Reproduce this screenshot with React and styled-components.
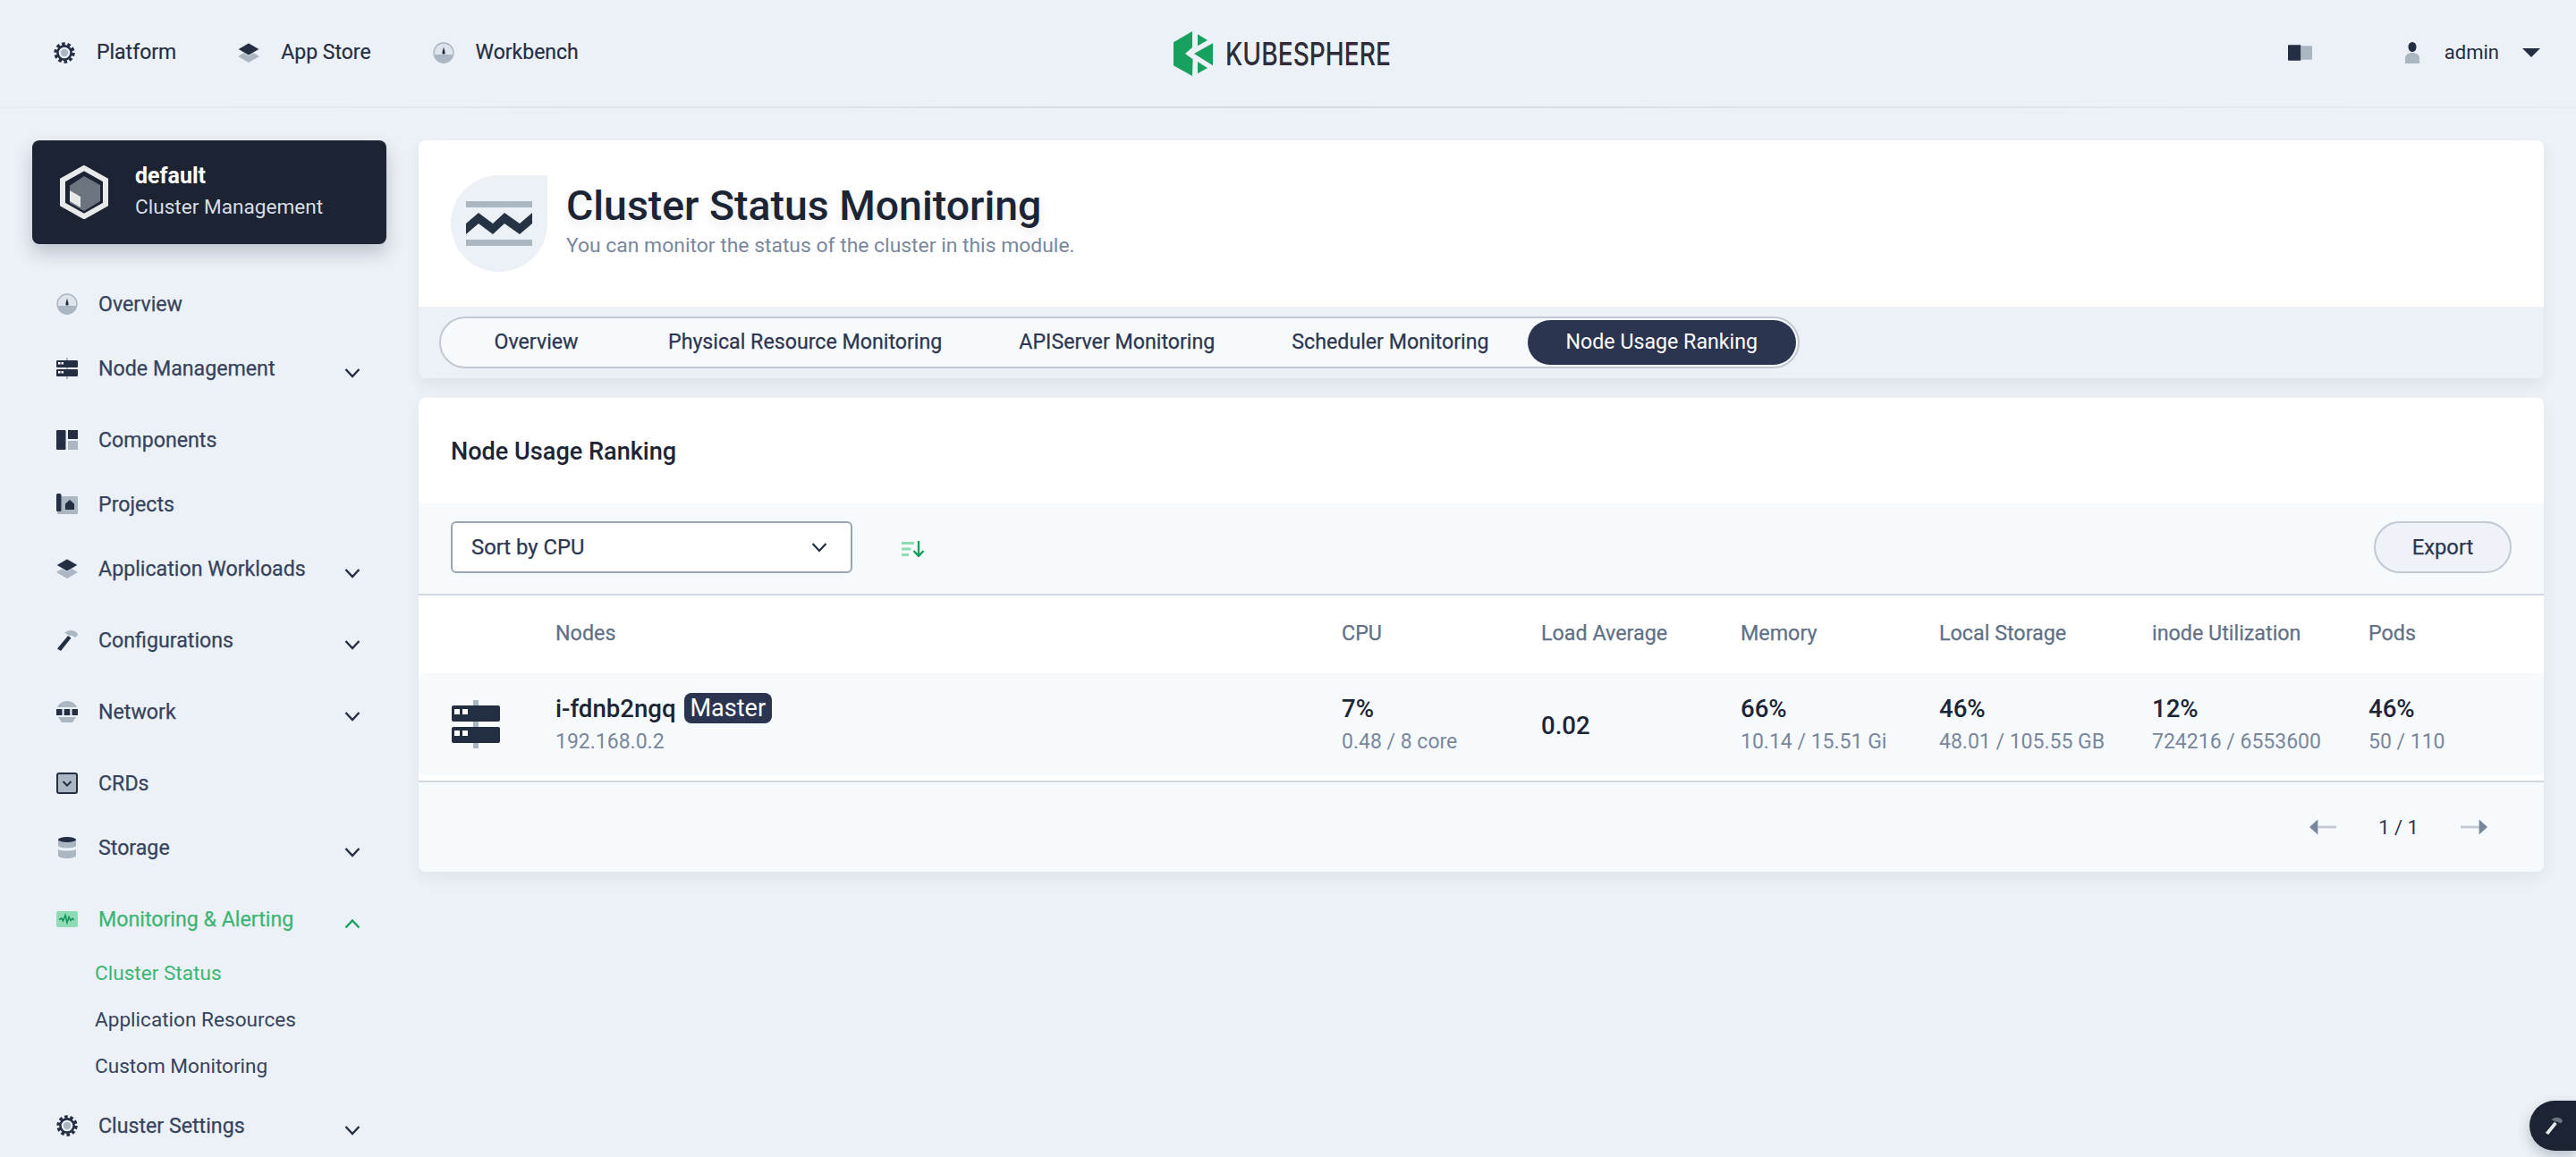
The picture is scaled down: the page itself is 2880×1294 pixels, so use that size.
import React from "react";
import styled, { createGlobalStyle } from "styled-components";

const DARK = "#242e42";
const LIGHT = "#abb6c3";
const GREEN = "#3cb574";
const BG = "#ecf1f7";
const FONT = `Roboto, Inter, "Noto Sans", sans-serif`;

const Global = createGlobalStyle`
  html, body { margin: 0; padding: 0; height: 1294px; overflow: hidden; background: ${BG}; }
  body { font-family: ${FONT}; font-size: 24px; color: ${DARK}; }
  * { box-sizing: border-box; }
`;

const Page = styled.div`
  position: relative;
  width: 2880px;
  height: 1294px;
  overflow: hidden;
  background: ${BG};
`;

/* Header */
const Header = styled.header`
  position: relative;
  display: grid;
  grid-template-columns: 1fr auto 1fr;
  align-items: center;
  height: 121px;
  padding: 0 40px 2px 60px;
  border-bottom: 2px solid transparent;
  border-image: linear-gradient(90deg, #e8ecf2 0%, #d4dae4 50%, #e8ecf2 100%) 1;
`;
const TopNav = styled.nav`
  display: flex;
  align-items: center;
  gap: 69px;
`;
const TopLink = styled.a`
  display: flex;
  align-items: center;
  gap: 24px;
  font-size: 23px;
  color: ${DARK};
  -webkit-text-stroke: 0.2px ${DARK};
`;
const TopIcon = styled.svg`
  flex: none;
  width: 24px;
  height: 24px;
`;
const Logo = styled.svg`
  display: block;
  width: 310px;
  height: 50px;
  margin: 3px -34px 0 0;
`;
const TopRight = styled.div`
  display: flex;
  justify-content: flex-end;
  align-items: center;
`;
const ThemeBtn = styled.svg`
  width: 27px;
  height: 18px;
  margin-right: 103px;
`;
const UserName = styled.span`
  margin: 0 26px 0 27px;
  font-size: 22px;
  color: ${DARK};
`;
const Caret = styled.i`
  width: 0;
  height: 0;
  border-left: 10px solid transparent;
  border-right: 10px solid transparent;
  border-top: 10px solid ${DARK};
`;

/* Shell */
const Shell = styled.div`
  display: grid;
  grid-template-columns: 396px 2376px;
  column-gap: 36px;
  padding: 36px 0 0 36px;
`;

/* Sidebar */
const Side = styled.aside`
  display: flex;
  flex-direction: column;
`;
const ClusterCard = styled.div`
  display: flex;
  align-items: center;
  gap: 29px;
  height: 116px;
  margin-bottom: 30px;
  padding-left: 30px;
  border-radius: 8px;
  background: #1c2333;
  box-shadow: 0 10px 20px rgba(36, 46, 66, 0.24);
`;
const ClusterText = styled.div`
  display: flex;
  flex-direction: column;
  gap: 7px;
  padding-bottom: 1px;
`;
const ClusterName = styled.div`
  font-size: 25px;
  line-height: 28px;
  font-weight: 700;
  color: #fff;
`;
const ClusterKind = styled.div`
  font-size: 22.6px;
  line-height: 28px;
  color: #d8dee5;
`;
const NavItem = styled.div`
  display: flex;
  align-items: flex-start;
  height: ${(p) => (p.$expand ? "80px" : "72px")};
  padding: 25px 27px 0 27px;
  color: ${(p) => (p.$active ? GREEN : "#36435c")};
`;
const NavIcon = styled.svg`
  flex: none;
  width: 24px;
  height: 24px;
  margin-right: 23px;
`;
const NavLabel = styled.span`
  flex: 1;
  font-size: 23.2px;
  line-height: 24px;
  -webkit-text-stroke: 0.25px currentColor;
`;
const Chevron = styled.svg`
  flex: none;
  width: 18px;
  height: 12px;
  margin-top: 11px;
  margin-right: 2px;
`;
const SubList = styled.div`
  display: flex;
  flex-direction: column;
  padding-bottom: 4px;
`;
const SubItem = styled.div`
  display: flex;
  align-items: center;
  height: 51.67px;
  padding-left: 70px;
  font-size: 22.6px;
  color: ${(p) => (p.$active ? GREEN : "#36435c")};
`;

/* Main */
const Main = styled.main`
  display: flex;
  flex-direction: column;
  gap: 22px;
`;
const HeadCard = styled.section`
  border-radius: 8px;
  overflow: hidden;
  background: ${BG};
  box-shadow: 0 8px 16px rgba(36, 46, 66, 0.07);
`;
const HeadTop = styled.div`
  display: flex;
  align-items: center;
  gap: 21px;
  height: 186px;
  padding: 0 36px;
  background: #fff;
`;
const Tear = styled.div`
  display: flex;
  align-items: center;
  justify-content: center;
  flex: none;
  width: 108px;
  height: 108px;
  border-radius: 50% 0 50% 50%;
  background: ${BG};
`;
const TitleBox = styled.div`
  display: flex;
  flex-direction: column;
  gap: 6px;
  padding-bottom: 6px;
`;
const Title = styled.h1`
  margin: 0;
  font-size: 46.4px;
  line-height: 50px;
  font-weight: 500;
  color: #1c2535;
  text-shadow: 0 6px 10px rgba(36, 46, 66, 0.1);
`;
const Desc = styled.p`
  margin: 0;
  font-size: 22.9px;
  line-height: 28px;
  color: #79879c;
`;
const TabBar = styled.div`
  display: flex;
  align-items: center;
  height: 80px;
  padding-left: 23px;
`;
const Tabs = styled.div`
  display: flex;
  align-items: center;
  height: 58px;
  padding: 0 2px;
  border: 2px solid #c1c9d4;
  border-radius: 29px;
  background: #f7fafd;
`;
const Tab = styled.div`
  display: flex;
  align-items: center;
  justify-content: center;
  height: 50px;
  min-width: ${(p) => p.$min || 0}px;
  padding: 0 43px 2px;
  border-radius: 25px;
  font-size: 23.2px;
  -webkit-text-stroke: ${(p) => (p.$active ? 0 : 0.25)}px currentColor;
  color: ${(p) => (p.$active ? "#fff" : "#2c3650")};
  background: ${(p) => (p.$active ? "#2c3550" : "transparent")};
`;
const RankCard = styled.section`
  border-radius: 8px;
  overflow: hidden;
  background: #f7fafd;
  box-shadow: 0 8px 16px rgba(36, 46, 66, 0.06);
`;
const RankTitle = styled.h2`
  display: flex;
  align-items: center;
  height: 118px;
  margin: 0;
  padding: 1px 0 0 36px;
  background: #fff;
  font-size: 27.1px;
  font-weight: 500;
  color: #1c2535;
`;
const Toolbar = styled.div`
  display: flex;
  align-items: center;
  height: 103px;
  padding: 0 36px 3px;
  border-bottom: 2px solid #d0d7e0;
`;
const Select = styled.div`
  display: flex;
  align-items: center;
  justify-content: space-between;
  width: 449px;
  height: 58px;
  padding: 0 26px 0 21px;
  border: 2px solid #99a5b5;
  border-radius: 6px;
  background: #fff;
  font-size: 23.8px;
  color: #2c3650;
  -webkit-text-stroke: 0.25px #2c3650;
`;
const SortIcon = styled.svg`
  width: 26px;
  height: 18px;
  margin: 4px 0 0 55px;
`;
const Export = styled.button`
  width: 154px;
  height: 58px;
  margin-left: auto;
  border: 2px solid #c1c9d4;
  border-radius: 29px;
  background: #eff2f8;
  font: 400 23.8px ${FONT};
  color: #2c3650;
  -webkit-text-stroke: 0.25px #2c3650;
`;
const columns = "153px 879px 223px 223px 222px 238px 242px 196px";
const HeadRow = styled.div`
  display: grid;
  grid-template-columns: ${columns};
  align-items: center;
  height: 87px;
  padding-bottom: 4px;
  background: #fff;
  font-size: 23.3px;
  color: #5f7087;
  -webkit-text-stroke: 0.25px #5f7087;
`;
const BodyWrap = styled.div`
  padding-bottom: 6px;
  border-bottom: 2px solid #d0d7e0;
  background: #fff;
`;
const BodyRow = styled.div`
  display: grid;
  grid-template-columns: ${columns};
  align-items: center;
  height: 114px;
  border-radius: 6px;
  background: #f7fafd;
`;
const NodeIconCell = styled.div`
  display: flex;
  padding-left: 37px;
`;
const Cell = styled.div`
  display: flex;
  flex-direction: column;
  gap: 10px;
  padding-top: 2px;
`;
const Main1 = styled.div`
  display: flex;
  align-items: center;
  gap: 9px;
  height: 28px;
  font-size: 27.6px;
  font-weight: 500;
  color: #1c2535;
`;
const Sub1 = styled.div`
  font-size: 23px;
  line-height: 28px;
  color: #79879c;
`;
const Badge = styled.span`
  display: flex;
  align-items: center;
  height: 34px;
  padding: 0 7px;
  border-radius: 8px;
  background: #2c3550;
  font-weight: 400;
  font-size: 27px;
  color: #fff;
`;
const Footer = styled.div`
  display: flex;
  align-items: center;
  justify-content: flex-end;
  gap: 47px;
  height: 100px;
  padding-right: 63px;
  font-size: 22px;
  color: #2c3650;
`;
const Arrow = styled.svg`
  width: 30px;
  height: 18px;
`;
const FloatBtn = styled.div`
  position: absolute;
  right: 0;
  top: 1231px;
  display: flex;
  align-items: center;
  padding-left: 17px;
  width: 52px;
  height: 56px;
  border-radius: 28px 0 0 28px;
  background: #1c2333;
  box-shadow: 0 6px 14px rgba(36, 46, 66, 0.25);
`;

/* Icons */
const Gear = () => (
  <>
    <circle cx="12" cy="12" r="10" fill="none" stroke={DARK} strokeWidth="3.4" strokeDasharray="3.6 2.68" />
    <circle cx="12" cy="12" r="7.6" fill="none" stroke={DARK} strokeWidth="2.6" />
    <circle cx="12" cy="12" r="4.2" fill={LIGHT} />
  </>
);
const Layers = () => (
  <>
    <path d="M12 9 24 16 12 23 0 16Z" fill={LIGHT} />
    <path d="M12 1 24 8 12 15 0 8Z" fill={DARK} stroke={BG} strokeWidth=".8" />
  </>
);
const Dash = () => (
  <>
    <circle cx="12" cy="12" r="11" fill="#dfe4eb" stroke={LIGHT} strokeWidth="1.4" />
    <path d="M2 14a10 10 0 0 0 20 0Z" fill={LIGHT} />
    <path d="M12 5.500 13.700 12a1.700 1.700 0 0 1-3.400 0Z" fill={DARK} />
  </>
);
const Server = () => (
  <>
    <rect x="11" y="0" width="2" height="24" fill={LIGHT} />
    <rect x="0" y="3" width="24" height="8" rx="1" fill={DARK} />
    <rect x="0" y="13" width="24" height="8" rx="1" fill={DARK} />
    <path d="M2 5h2.500v2.500H2zM5.500 5H8v2.500H5.500zM2 15h2.500v2.500H2zM5.500 15H8v2.500H5.500z" fill="#fff" />
  </>
);
const Comp = () => (
  <>
    <rect x="0" y="1" width="10.500" height="22" rx="1" fill={DARK} />
    <rect x="13" y="1" width="11" height="10" fill={DARK} />
    <rect x="13" y="13" width="11" height="10" fill={LIGHT} />
  </>
);
const Proj = () => (
  <>
    <rect x="1" y="3" width="23" height="20" rx="1" fill={LIGHT} />
    <rect x="0" y="0" width="5.500" height="20" rx="1.500" fill={DARK} />
    <path d="M15 7 20 11.500V18H10V11.500Z" fill={DARK} />
  </>
);
const Hammer = ({ head = LIGHT, handle = DARK }) => (
  <>
    <path d="M9 4C13 0 19 0 23 3.500L24 6 21.500 9 17 6.500 14.500 7 11.500 5Z" fill={head} />
    <path d="M13 7 16.500 9.500 5 24 1 21.500Z" fill={handle} />
  </>
);
const Net = () => (
  <>
    <path d="M1 7C2.500 3 7 0 12 0S21.500 3 23 7Z" fill={LIGHT} />
    <path d="M0 9h6.500v7H0zM8.700 9h6.600v7H8.700zM17.500 9H24v7h-6.500z" fill={DARK} />
    <path d="M2 18H22L18 24H6Z" fill={LIGHT} />
  </>
);
const Crd = () => (
  <>
    <rect x="1" y="1" width="22" height="22" rx="2" fill={LIGHT} stroke={DARK} strokeWidth="2" />
    <path d="M7.500 10 12 14.500 16.500 10" fill="none" stroke={DARK} strokeWidth="2" />
  </>
);
const Storage = () => (
  <>
    <path d="M2 2.500h20v8c-4 2.500-16 2.500-20 0Z" fill={LIGHT} />
    <path d="M2 14c4 2 16 2 20 0v7c0 1.500-4.500 3-10 3s-10-1.500-10-3Z" fill={LIGHT} />
    <ellipse cx="12" cy="3" rx="10" ry="3" fill={DARK} />
  </>
);
const Monitor = () => (
  <>
    <rect x="0" y="3" width="24" height="18" rx="2" fill="#8fdcb4" />
    <path d="M3 12.500 6 11 7.500 14 10 7.500 12 16 14 9.500 16 13.500 18 11 20 13" fill="none" stroke="#149158" strokeWidth="1.500" />
  </>
);
const Down = ({ up, color = DARK }) => (
  <Chevron viewBox="0 0 18 12">
    <path d={up ? "M1.500 10.500 9 2.500l7.500 8" : "M1.500 2 9 10l7.500-8"} fill="none" stroke={color} strokeWidth="2.400" />
  </Chevron>
);

const items = [
  { label: "Overview", icon: <Dash /> },
  { label: "Node Management", icon: <Server />, expand: true },
  { label: "Components", icon: <Comp /> },
  { label: "Projects", icon: <Proj /> },
  { label: "Application Workloads", icon: <Layers />, expand: true },
  { label: "Configurations", icon: <Hammer />, expand: true },
  { label: "Network", icon: <Net />, expand: true },
  { label: "CRDs", icon: <Crd /> },
  { label: "Storage", icon: <Storage />, expand: true },
];

const tabs = ["Overview", "Physical Resource Monitoring", "APIServer Monitoring", "Scheduler Monitoring", "Node Usage Ranking"];
const heads = ["", "Nodes", "CPU", "Load Average", "Memory", "Local Storage", "inode Utilization", "Pods"];
const metrics = [
  ["7%", "0.48 / 8 core"],
  ["0.02"],
  ["66%", "10.14 / 15.51 Gi"],
  ["46%", "48.01 / 105.55 GB"],
  ["12%", "724216 / 6553600"],
  ["46%", "50 / 110"],
];

export default function App() {
  return (
    <Page>
      <Global />
      <Header>
        <TopNav>
          <TopLink><TopIcon viewBox="0 0 24 24"><Gear /></TopIcon>Platform</TopLink>
          <TopLink><TopIcon viewBox="0 0 24 24"><Layers /></TopIcon>App Store</TopLink>
          <TopLink><TopIcon viewBox="0 0 24 24"><Dash /></TopIcon>Workbench</TopLink>
        </TopNav>
        <Logo viewBox="0 0 310 50">
          <path d="M0 12.300 21 0V18L13 25 21.600 31.300 21 50 0 38.300Z" fill="#17a05e" />
          <path d="M44 13.300V38.300L23 25Z" fill="#17a05e" />
          <path d="M27 3.300 38 10 27 16.300ZM27 34 38 41 27 47.300Z" fill="#17a05e" />
          <text x="58" y="38" fontFamily="Inter, sans-serif" fontSize="36" fontWeight="500" fill="#302c37" textLength="185" lengthAdjust="spacingAndGlyphs">KUBESPHERE</text>
        </Logo>
        <TopRight>
          <ThemeBtn viewBox="0 0 28 18">
            <rect x="0" y="0" width="15" height="18" rx="1" fill={DARK} />
            <rect x="15" y="1" width="13" height="16" fill={LIGHT} />
          </ThemeBtn>
          <svg width="18" height="24" viewBox="0 0 18 24">
            <ellipse cx="9" cy="5.500" rx="4.500" ry="5.500" fill={DARK} />
            <path d="M1 24V18C1 14 5 12 9 12S17 14 17 18V24Z" fill={LIGHT} />
          </svg>
          <UserName>admin</UserName>
          <Caret />
        </TopRight>
      </Header>
      <Shell>
        <Side>
          <ClusterCard>
            <svg width="56" height="60" viewBox="0 0 54 60">
              <path d="M27 3 51 16.500V43.500L27 57 3 43.500V16.500Z" fill="#1c2333" stroke="#e8e9ea" strokeWidth="6" />
              <path d="M27 12 45 22V40L27 51 11 42V22.500Z" fill="#6c7480" />
              <path d="M11 28 23 35V47L11 40Z" fill="#e8e9ea" />
            </svg>
            <ClusterText>
              <ClusterName>default</ClusterName>
              <ClusterKind>Cluster Management</ClusterKind>
            </ClusterText>
          </ClusterCard>
          {items.map((it) => (
            <NavItem key={it.label} $expand={it.expand}>
              <NavIcon viewBox="0 0 24 24">{it.icon}</NavIcon>
              <NavLabel>{it.label}</NavLabel>
              {it.expand && <Down />}
            </NavItem>
          ))}
          <NavItem $active>
            <NavIcon viewBox="0 0 24 24"><Monitor /></NavIcon>
            <NavLabel>Monitoring &amp; Alerting</NavLabel>
            <Down up color="#17a05e" />
          </NavItem>
          <SubList>
            <SubItem $active>Cluster Status</SubItem>
            <SubItem>Application Resources</SubItem>
            <SubItem>Custom Monitoring</SubItem>
          </SubList>
          <NavItem $expand>
            <NavIcon viewBox="0 0 24 24"><Gear /></NavIcon>
            <NavLabel>Cluster Settings</NavLabel>
            <Down />
          </NavItem>
        </Side>
        <Main>
          <HeadCard>
            <HeadTop>
              <Tear>
                <svg width="74" height="50" viewBox="0 0 74 50">
                  <rect y="0" width="74" height="7" fill={LIGHT} />
                  <rect y="43" width="74" height="7" fill={LIGHT} />
                  <path d="M0 25 14 13 30 25 43 13 60 25 74 13V25L60 37 43 25 30 37 14 25 0 37Z" fill="#253345" />
                </svg>
              </Tear>
              <TitleBox>
                <Title>Cluster Status Monitoring</Title>
                <Desc>You can monitor the status of the cluster in this module.</Desc>
              </TitleBox>
            </HeadTop>
            <TabBar>
              <Tabs>
                {tabs.map((t, i) => (
                  <Tab key={t} $min={i === 0 ? 209 : 0} $active={i === tabs.length - 1}>{t}</Tab>
                ))}
              </Tabs>
            </TabBar>
          </HeadCard>
          <RankCard>
            <RankTitle>Node Usage Ranking</RankTitle>
            <Toolbar>
              <Select>
                Sort by CPU
                <svg width="18" height="12" viewBox="0 0 18 12">
                  <path d="M1.500 2 9 10l7.500-8" fill="none" stroke={DARK} strokeWidth="2.200" />
                </svg>
              </Select>
              <SortIcon viewBox="0 0 26 18">
                <path d="M0 1h14v3H0zM0 7.500h10.500v3H0zM0 14h8v3H0z" fill="#8fdcb4" />
                <path d="M19 0V16M13.500 11l5.500 6 5.500-6" fill="none" stroke="#17a05e" strokeWidth="2.400" />
              </SortIcon>
              <Export>Export</Export>
            </Toolbar>
            <HeadRow>
              {heads.map((h) => <div key={h}>{h}</div>)}
            </HeadRow>
            <BodyWrap>
              <BodyRow>
                <NodeIconCell>
                  <svg width="54" height="54" viewBox="0 0 54 54">
                    <rect x="24" y="0" width="6" height="54" fill={LIGHT} />
                    <rect x="0" y="6" width="54" height="18" rx="2" fill={DARK} />
                    <rect x="0" y="30" width="54" height="18" rx="2" fill={DARK} />
                    <path d="M3 10h6v6H3zM12 10h6v6h-6zM3 34h6v6H3zM12 34h6v6h-6z" fill="#fff" />
                  </svg>
                </NodeIconCell>
                <Cell>
                  <Main1>i-fdnb2ngq<Badge>Master</Badge></Main1>
                  <Sub1>192.168.0.2</Sub1>
                </Cell>
                {metrics.map((m, i) => (
                  <Cell key={i}>
                    <Main1>{m[0]}</Main1>
                    {m[1] && <Sub1>{m[1]}</Sub1>}
                  </Cell>
                ))}
              </BodyRow>
            </BodyWrap>
            <Footer>
              <Arrow viewBox="0 0 32 18">
                <path d="M10 7.500h22v3H10z" fill="#c1c9d4" />
                <path d="M10 0V18L0 9Z" fill="#79879c" />
              </Arrow>
              1 / 1
              <Arrow viewBox="0 0 32 18">
                <path d="M0 7.500h22v3H0z" fill="#c1c9d4" />
                <path d="M22 0V18L32 9Z" fill="#79879c" />
              </Arrow>
            </Footer>
          </RankCard>
        </Main>
      </Shell>
      <FloatBtn>
        <svg width="20" height="24" viewBox="0 0 24 24"><Hammer head="#6c7480" handle="#e8e9ea" /></svg>
      </FloatBtn>
    </Page>
  );
}
